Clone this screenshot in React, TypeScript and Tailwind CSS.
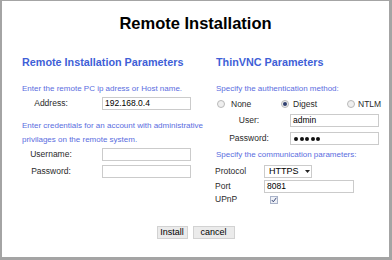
import React from "react";

const label = "text-[8.5px] text-[#2a2a2a] leading-[11px]";
const hint = "text-[8px] text-[#5a6de0] leading-[11px] whitespace-nowrap";
const heading = "text-[10.8px] font-bold text-[#3f5fd7] leading-[14px] whitespace-nowrap";
const field = "h-[13px] border border-[#cbcbcb] bg-white text-[8.5px] leading-[11px] px-[2px] text-black flex items-center";

function Radio({ checked }: { checked?: boolean }) {
  return (
    <span className="w-[8px] h-[8px] rounded-full border border-[#b9b9b9] bg-[#efefef] flex items-center justify-center shrink-0">
      {checked && <span className="w-[4px] h-[4px] rounded-full bg-[#2f3f6f]" />}
    </span>
  );
}

function Dots() {
  return (
    <div className="flex gap-[1.5px] pl-[1px]">
      {[0, 1, 2, 3, 4].map((i) => (
        <span key={i} className="w-[4px] h-[4px] rounded-full bg-[#111]" />
      ))}
    </div>
  );
}

export default function App() {
  return (
    <div
      className="w-[392px] h-[260px] bg-white border-l-2 border-t border-r-[3px] border-b-[3px] border-[#a4a4a4] flex flex-col"
      style={{ fontFamily: '"Liberation Sans", Arial, sans-serif' }}
    >
      <h1 className="text-center text-[16.5px] font-bold text-black leading-[20px] mt-[12px]">Remote Installation</h1>

      <div className="flex mt-[22px]">
        {/* left column */}
        <div className="w-[194px] pl-[20px] flex flex-col">
          <h2 className={heading}>Remote Installation Parameters</h2>
          <p className={`${hint} mt-[14px]`}>Enter the remote PC ip adress or Host name.</p>
          <div className="flex items-center mt-[3px]">
            <span className={`${label} w-[58px] text-center`}>Address:</span>
            <div className={`${field} w-[89px] ml-[22px]`}>192.168.0.4</div>
          </div>
          <p className={`${hint} mt-[9px] leading-[13.5px]`}>
            Enter credentials for an account with administrative
            <br />
            privilages on the remote system.
          </p>
          <div className="flex items-center mt-[2px]">
            <span className={`${label} w-[58px] text-center`}>Username:</span>
            <div className={`${field} w-[89px] ml-[22px]`} />
          </div>
          <div className="flex items-center mt-[4px]">
            <span className={`${label} w-[58px] text-center`}>Password:</span>
            <div className={`${field} w-[89px] ml-[22px]`} />
          </div>
        </div>

        {/* right column */}
        <div className="flex-1 pl-[20px] flex flex-col">
          <h2 className={heading}>ThinVNC Parameters</h2>
          <p className={`${hint} mt-[14px]`}>Specify the authentication method:</p>
          <div className="flex items-center h-[12px] mt-[4px] pl-[1px]">
            <div className="flex items-center gap-[6px] w-[64px]">
              <Radio />
              <span className={label}>None</span>
            </div>
            <div className="flex items-center gap-[4px] w-[66px]">
              <Radio checked />
              <span className={label}>Digest</span>
            </div>
            <div className="flex items-center gap-[3px]">
              <Radio />
              <span className={label}>NTLM</span>
            </div>
          </div>
          <div className="flex items-center mt-[4px]">
            <span className={`${label} w-[66px] text-center`}>User:</span>
            <div className={`${field} w-[89px] ml-[8px]`}>admin</div>
          </div>
          <div className="flex items-center mt-[5px]">
            <span className={`${label} w-[66px] text-center`}>Password:</span>
            <div className={`${field} w-[89px] ml-[8px]`}>
              <Dots />
            </div>
          </div>
          <p className={`${hint} mt-[4px]`}>Specify the communication parameters:</p>
          <div className="flex flex-col -ml-[1px] mt-[5px]">
            <div className="flex items-center">
              <span className={`${label} w-[49px]`}>Protocol</span>
              <div className="h-[13px] w-[48px] border border-[#cbcbcb] flex items-center pl-[4px] gap-[6px] text-[9px] leading-[11px] text-black">
                HTTPS
                <svg width="5" height="3" viewBox="0 0 5 3">
                  <path d="M0 0h5L2.5 3z" fill="#222" />
                </svg>
              </div>
            </div>
            <div className="flex items-center mt-[2px]">
              <span className={`${label} w-[49px]`}>Port</span>
              <div className={`${field} w-[90px] px-[1px]`}>8081</div>
            </div>
            <div className="flex items-center mt-[2px] h-[9px]">
              <span className={`${label} w-[55px]`}>UPnP</span>
              <span className="w-[8px] h-[8px] border border-[#a9b3c9] bg-[#eef0f6] flex items-center justify-center">
                <svg width="6" height="6" viewBox="0 0 6 6">
                  <path d="M0.8 3l1.5 1.8L5.3 0.8" stroke="#3c4a78" strokeWidth="1" fill="none" />
                </svg>
              </span>
            </div>
          </div>
        </div>
      </div>

      <div className="flex justify-center gap-[5px] mt-[22px]">
        <button className="h-[13px] w-[31px] bg-[#ebebeb] border border-[#d2d2d2] text-[9px] leading-[11px] text-black">Install</button>
        <button className="h-[13px] w-[42px] bg-[#ebebeb] border border-[#d2d2d2] text-[9px] leading-[11px] text-black">cancel</button>
      </div>
    </div>
  );
}
